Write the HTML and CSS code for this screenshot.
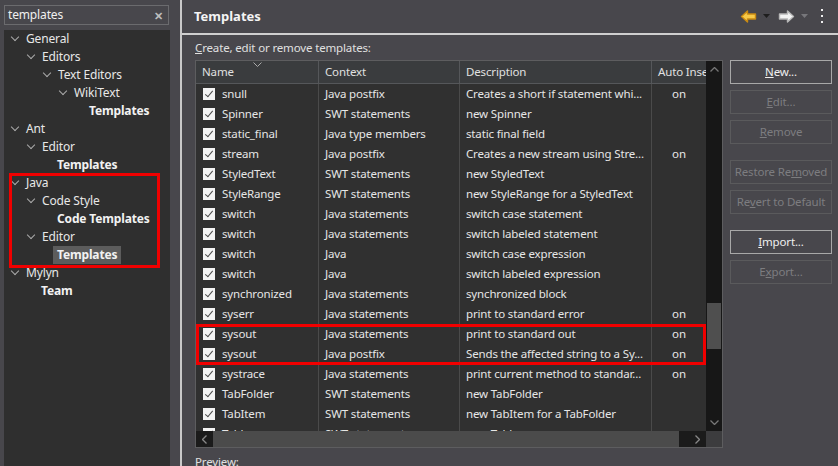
FILE: index.html
```html
<!DOCTYPE html>
<html>
<head>
<meta charset="utf-8">
<link rel="stylesheet" href="styles.css">
</head>
<body>
<div class="app">
  <aside class="left">
    <div class="search"><span>templates</span><span class="clear">✕</span></div>
    <div class="tree">
      <div class="node l0"><i class="chev"></i>General</div>
      <div class="node l1"><i class="chev"></i>Editors</div>
      <div class="node l2"><i class="chev"></i>Text Editors</div>
      <div class="node l3"><i class="chev"></i>WikiText</div>
      <div class="node l4 leaf"><b>Templates</b></div>
      <div class="node l0"><i class="chev"></i>Ant</div>
      <div class="node l1"><i class="chev"></i>Editor</div>
      <div class="node l2 leaf"><b>Templates</b></div>
      <div class="hl tree-hl">
        <div class="node l0"><i class="chev"></i>Java</div>
        <div class="node l1"><i class="chev"></i>Code Style</div>
        <div class="node l2 leaf"><b>Code Templates</b></div>
        <div class="node l1"><i class="chev"></i>Editor</div>
        <div class="node l2 leaf"><b class="sel">Templates</b></div>
      </div>
      <div class="node l0"><i class="chev"></i>Mylyn</div>
      <div class="node l1 leaf"><b>Team</b></div>
    </div>
  </aside>
  <main class="right">
    <header class="head">
      <h1>Templates</h1>
      <div class="nav">
        <svg width="17" height="13" viewBox="0 0 17 13"><path d="M1.5 6.5 L7.5 1 L7.5 4 L15.5 4 L15.5 9 L7.5 9 L7.5 12 Z" fill="#f7c948" stroke="#c98a12" stroke-width="1.4" stroke-linejoin="round"/></svg>
        <svg class="tri" width="7" height="4" viewBox="0 0 7 4"><path d="M0 0 H7 L3.5 4 Z" fill="#1e1e1e"/></svg>
        <svg width="17" height="13" viewBox="0 0 17 13"><path d="M15.5 6.5 L9.5 1 L9.5 4 L1.5 4 L1.5 9 L9.5 9 L9.5 12 Z" fill="#f4f4f4" stroke="#b8b8b8" stroke-width="1.4" stroke-linejoin="round"/></svg>
        <svg class="tri" width="7" height="4" viewBox="0 0 7 4"><path d="M0 0 H7 L3.5 4 Z" fill="#77777b"/></svg>
        <svg class="dots" width="4" height="14" viewBox="0 0 4 14"><rect x="1" y="0" width="2" height="2" fill="#eee"/><rect x="1" y="6" width="2" height="2" fill="#eee"/><rect x="1" y="12" width="2" height="2" fill="#eee"/></svg>
      </div>
    </header>
    <section class="content">
      <div class="label"><u>C</u>reate, edit or remove templates:</div>
      <div class="work">
        <div class="table">
          <div class="tmain">
            <div class="tcols">
              <div class="thead">
                <div class="th">Name<svg class="sort" width="9" height="5" viewBox="0 0 9 5"><path d="M0.5 0.5 L4.5 4.5 L8.5 0.5" fill="none" stroke="#aaa" stroke-width="1"/></svg></div>
                <div class="th">Context</div>
                <div class="th">Description</div>
                <div class="th">Auto Insert</div>
              </div>
              <div class="tbody">
                <div class="row"><div class="c name"><i class="cb"></i>snull</div><div class="c">Java postfix</div><div class="c">Creates a short if statement whi...</div><div class="c auto">on</div></div>
                <div class="row"><div class="c name"><i class="cb"></i>Spinner</div><div class="c">SWT statements</div><div class="c">new Spinner</div><div class="c auto"></div></div>
                <div class="row"><div class="c name"><i class="cb"></i>static_final</div><div class="c">Java type members</div><div class="c">static final field</div><div class="c auto"></div></div>
                <div class="row"><div class="c name"><i class="cb"></i>stream</div><div class="c">Java postfix</div><div class="c">Creates a new stream using Stre...</div><div class="c auto">on</div></div>
                <div class="row"><div class="c name"><i class="cb"></i>StyledText</div><div class="c">SWT statements</div><div class="c">new StyledText</div><div class="c auto"></div></div>
                <div class="row"><div class="c name"><i class="cb"></i>StyleRange</div><div class="c">SWT statements</div><div class="c">new StyleRange for a StyledText</div><div class="c auto"></div></div>
                <div class="row"><div class="c name"><i class="cb"></i>switch</div><div class="c">Java statements</div><div class="c">switch case statement</div><div class="c auto"></div></div>
                <div class="row"><div class="c name"><i class="cb"></i>switch</div><div class="c">Java statements</div><div class="c">switch labeled statement</div><div class="c auto"></div></div>
                <div class="row"><div class="c name"><i class="cb"></i>switch</div><div class="c">Java</div><div class="c">switch case expression</div><div class="c auto"></div></div>
                <div class="row"><div class="c name"><i class="cb"></i>switch</div><div class="c">Java</div><div class="c">switch labeled expression</div><div class="c auto"></div></div>
                <div class="row"><div class="c name"><i class="cb"></i>synchronized</div><div class="c">Java statements</div><div class="c">synchronized block</div><div class="c auto"></div></div>
                <div class="row"><div class="c name"><i class="cb"></i>syserr</div><div class="c">Java statements</div><div class="c">print to standard error</div><div class="c auto">on</div></div>
                <div class="hl table-hl">
                  <div class="row"><div class="c name"><i class="cb"></i>sysout</div><div class="c">Java statements</div><div class="c">print to standard out</div><div class="c auto">on</div></div>
                  <div class="row"><div class="c name"><i class="cb"></i>sysout</div><div class="c">Java postfix</div><div class="c">Sends the affected string to a Sy...</div><div class="c auto">on</div></div>
                </div>
                <div class="row"><div class="c name"><i class="cb"></i>systrace</div><div class="c">Java statements</div><div class="c">print current method to standar...</div><div class="c auto">on</div></div>
                <div class="row"><div class="c name"><i class="cb"></i>TabFolder</div><div class="c">SWT statements</div><div class="c">new TabFolder</div><div class="c auto"></div></div>
                <div class="row"><div class="c name"><i class="cb"></i>TabItem</div><div class="c">SWT statements</div><div class="c">new TabItem for a TabFolder</div><div class="c auto"></div></div>
                <div class="row"><div class="c name"><i class="cb"></i>Table</div><div class="c">SWT statements</div><div class="c">new Table</div><div class="c auto"></div></div>
              </div>
            </div>
            <div class="vscroll">
              <svg class="arr" width="9" height="5" viewBox="0 0 9 5"><path d="M0.5 4.5 L4.5 0.5 L8.5 4.5" fill="none" stroke="#777" stroke-width="1.3"/></svg>
              <div class="vtrack"><div class="vthumb"></div></div>
              <svg class="arr" width="9" height="5" viewBox="0 0 9 5"><path d="M0.5 0.5 L4.5 4.5 L8.5 0.5" fill="none" stroke="#777" stroke-width="1.3"/></svg>
            </div>
          </div>
          <div class="hscroll">
            <div class="harr"><svg width="5" height="9" viewBox="0 0 5 9"><path d="M4.5 0.5 L0.5 4.5 L4.5 8.5" fill="none" stroke="#888" stroke-width="1.3"/></svg></div>
            <div class="hthumb"></div>
            <div class="hrest"><svg width="5" height="9" viewBox="0 0 5 9"><path d="M0.5 0.5 L4.5 4.5 L0.5 8.5" fill="none" stroke="#888" stroke-width="1.3"/></svg></div>
            <div class="corner"></div>
          </div>
        </div>
        <div class="buttons">
          <button class="btn on"><u>N</u>ew...</button>
          <button class="btn"><u>E</u>dit...</button>
          <button class="btn"><u>R</u>emove</button>
          <button class="btn gap">Restore Re<u>m</u>oved</button>
          <button class="btn">Re<u>v</u>ert to Default</button>
          <button class="btn on gap"><u>I</u>mport...</button>
          <button class="btn">E<u>x</u>port...</button>
        </div>
      </div>
      <div class="preview">Preview:</div>
    </section>
  </main>
</div>
</body>
</html>
```
FILE: styles.css
```css
* { box-sizing: border-box; }
html, body { margin: 0; padding: 0; }
body {
  width: 838px; height: 466px; overflow: hidden;
  background: #48474c;
  color: #e4e4e4;
  font-family: "Noto Sans", "Open Sans", sans-serif;
  font-size: 11.5px;
  letter-spacing: -0.15px;
}
.app { display: flex; height: 466px; }

/* left */
.left { width: 182px; flex: none; padding: 5px 0 0 4px; display: flex; flex-direction: column; border-right: 2px solid #c9c9c9; }
.search {
  flex: none; width: 165px; height: 20px; border: 1px solid #6b6b6e;
  display: flex; align-items: center; justify-content: space-between;
  padding: 0 5px 0 3px; color: #f0f0f0; line-height: 1; font-size: 12px;
}
.search .clear { color: #bdbdbd; font-size: 11px; font-weight: bold; }
.tree { margin-top: 5px; width: 166px; flex: 1; background: #2f2f2f; font-size: 12px; }
.node { height: 18px; line-height: 18px; display: flex; align-items: center; white-space: nowrap; color: #e8e8e8; }
.node b { font-weight: bold; color: #f2f2f2; padding: 0 4px; margin-left: -4px; }
.node b.sel { background: #5c5c5c; }
.chev { display: inline-block; width: 6px; height: 6px; border-right: 1.3px solid #aaa; border-bottom: 1.3px solid #aaa; transform: rotate(45deg); margin: -4px 8px 0 2px; }
.l0 { padding-left: 6px; }
.l1 { padding-left: 22px; }
.l2 { padding-left: 38px; }
.l3 { padding-left: 54px; }
.l0.leaf { padding-left: 21px; }
.l1.leaf { padding-left: 37px; }
.l2.leaf { padding-left: 53px; }
.l4.leaf { padding-left: 85px; }

.hl { position: relative; }
.hl::after { content: ""; position: absolute; border: 3px solid #f00000; pointer-events: none; }
.tree-hl::after { left: 5px; top: -1px; width: 145px; bottom: -4px; }
.table-hl::after { left: 0; top: 0; right: 0; bottom: -1px; }

/* right */
.right { flex: 1; display: flex; flex-direction: column; min-height: 0; }
.head { flex: none; height: 35px; border-bottom: 2px solid #cfcfcf; display: flex; align-items: center; justify-content: space-between; padding: 0 14px 1px 12px; }
.head h1 { margin: 0; font-size: 13px; font-weight: bold; color: #f4f4f4; letter-spacing: 0; }
.nav { display: flex; align-items: center; }
.nav .tri { margin: 0 8px 0 6px; }
.nav .dots { margin-left: 4px; }
.content { padding: 5px 0 0 13px; flex: 1; display: flex; flex-direction: column; min-height: 0; }
.label { flex: none; height: 20px; color: #e0e0e0; }
.work { flex: none; display: flex; gap: 7px; }

.table { width: 528px; height: 388px; border: 1px solid #5d5d5f; display: flex; flex-direction: column; background: #303030; }
.tmain { flex: 1; display: flex; min-height: 0; }
.tcols { flex: 1; overflow: hidden; display: flex; flex-direction: column; }
.thead { height: 23px; display: grid; grid-template-columns: 123px 141px 192px 54px; background: #3a3c3e; border-bottom: 1px solid #55575a; flex: none; }
.th { position: relative; padding-left: 6px; line-height: 22px; border-right: 1px solid #55575a; white-space: nowrap; overflow: hidden; color: #e0e0e0; }
.th:last-child { border-right: none; }
.sort { position: absolute; left: 57px; top: 1px; }
.tbody { flex: 1; overflow: hidden;
  background-image: linear-gradient(#4a4a4a, #4a4a4a), linear-gradient(#4a4a4a, #4a4a4a), linear-gradient(#4a4a4a, #4a4a4a);
  background-size: 1px 100%, 1px 100%, 1px 100%;
  background-position: 122px 0, 263px 0, 455px 0;
  background-repeat: no-repeat;
}
.row { height: 20px; display: grid; grid-template-columns: 123px 141px 192px 54px; line-height: 20px; color: #e6e6e6; }
.c { padding-left: 6px; white-space: nowrap; overflow: hidden; }
.c.name { display: flex; align-items: center; padding-left: 7px; }
.c.auto { text-align: center; padding-left: 0; }
.cb { display: inline-block; flex: none; width: 12px; height: 12px; background: #f4f4f4; margin-right: 7px; position: relative; }
.cb::after { content: ""; position: absolute; left: 4px; top: 1px; width: 3px; height: 7px; border-right: 1.6px solid #4a4a4a; border-bottom: 1.6px solid #4a4a4a; transform: rotate(40deg); }

.vscroll { width: 16px; background: #171717; display: flex; flex-direction: column; align-items: center; padding: 6px 0 6px; }
.vscroll .arr { flex: none; }
.vtrack { flex: 1; width: 16px; position: relative; }
.vthumb { position: absolute; left: 1px; right: 1px; top: 231px; height: 46px; background: #4f4f4f; }

.hscroll { height: 16px; display: flex; flex: none; }
.harr { width: 17px; background: #1b1b1b; display: flex; align-items: center; justify-content: center; }
.hthumb { width: 466px; background: #4b4b4b; }
.hrest { flex: 1; background: #1b1b1b; display: flex; align-items: center; justify-content: flex-end; padding-right: 6px; }
.corner { width: 16px; background: #3c3c3e; }

.buttons { display: flex; flex-direction: column; gap: 6px; }
.btn {
  width: 102px; height: 24px; background: transparent; border: 1px solid #5a5a5c;
  color: #7d7d80; font-family: inherit; font-size: 11.5px; letter-spacing: -0.15px; padding: 0; line-height: 20px; white-space: nowrap;
}
.btn.on { border-color: #a8a8a8; color: #efefef; }
.btn.gap { margin-top: 10px; }

.preview { flex: none; margin-top: 6px; color: #e0e0e0; }
```
